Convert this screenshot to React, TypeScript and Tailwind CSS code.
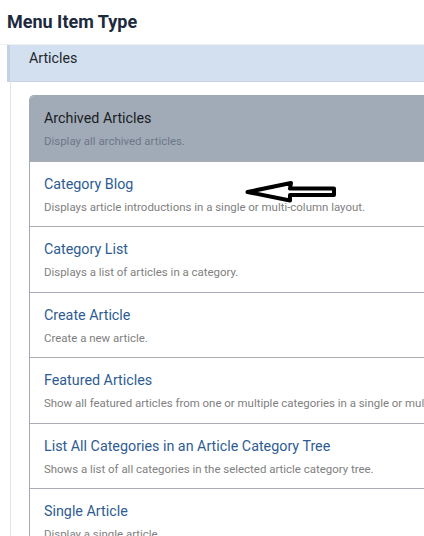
import React from "react";

const items = [
  { t: "Category Blog", d: "Displays article introductions in a single or multi-column layout." },
  { t: "Category List", d: "Displays a list of articles in a category." },
  { t: "Create Article", d: "Create a new article." },
  {
    t: "Featured Articles",
    d: "Show all featured articles from one or multiple categories in a single or multi-column layout.",
  },
  {
    t: "List All Categories in an Article Category Tree",
    d: "Shows a list of all categories in the selected article category tree.",
  },
  { t: "Single Article", d: "Display a single article." },
];

export default function App() {
  return (
    <div
      className="relative w-[424px] h-[536px] overflow-hidden bg-white"
      style={{ fontFamily: "Roboto, 'Noto Sans', sans-serif" }}
    >
      <div className="h-[45px] pl-[7px] pt-[10px] border-b border-[#eef0f3]">
        <h1 className="text-[18px] leading-[24px] font-bold text-[#1c2a3d]">Menu Item Type</h1>
      </div>
      <div className="h-[37px] ml-[7px] bg-[#d3e0ef] border-l-[3px] border-[#c3d1e4] border-b border-b-[#c9d4e3] pl-[19px] pt-[1px]">
        <span className="text-[14.2px] leading-[20px] text-[#22262a]">Articles</span>
      </div>
      <div className="ml-[10px] border-l border-[#e1e4e8] pl-[18px] pt-[13px] h-[500px]">
        <div className="border border-r-0 border-[#a3abb6] rounded-tl-[5px] overflow-hidden whitespace-nowrap">
          <div className="h-[65px] bg-[#a1abb8] pl-[14px] pt-[12px]">
            <div className="text-[14.3px] leading-[20px] text-[#1a1d21]">Archived Articles</div>
            <div className="mt-[5px] text-[11.45px] leading-[16px] text-[#6c7788]">Display all archived articles.</div>
          </div>
          {items.map((it, i) => (
            <div key={i} className="h-[65.4px] border-t border-[#a9adb3] pl-[14px] pt-[12px] bg-white">
              <div className="text-[14.3px] leading-[20px] text-[#2e5c92]">{it.t}</div>
              <div className="mt-[5px] text-[11.45px] leading-[16px] text-[#808080]">{it.d}</div>
            </div>
          ))}
        </div>
      </div>
      <svg
        className="absolute left-[244px] top-[180px]"
        width="94"
        height="24"
        viewBox="0 0 94 24"
      >
        <polygon
          points="3.5,12 47,3 46,8.5 90,8.5 90,15 46,15 46,20.5"
          fill="white"
          stroke="black"
          strokeWidth="4"
          strokeLinejoin="round"
        />
      </svg>
    </div>
  );
}
